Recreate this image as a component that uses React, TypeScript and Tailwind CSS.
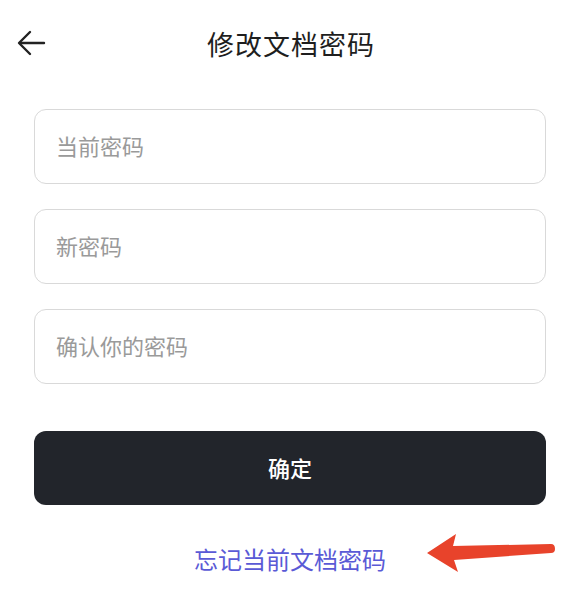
import React from "react";

const font = { fontFamily: '"Noto Sans CJK SC", "Noto Sans", sans-serif' };

function Field({ placeholder }: { placeholder: string }) {
  return (
    <input
      type="password"
      placeholder={placeholder}
      className="h-[75px] w-full rounded-[12px] border border-[#d9d9d9] bg-white px-[21px] pb-[4px] text-[22px] text-[#333] outline-none placeholder:text-[#9a9a9a]"
      style={font}
    />
  );
}

export default function App() {
  return (
    <div className="relative h-[608px] w-[586px] bg-white" style={font}>
      <header className="relative flex h-[88px] items-center justify-center pr-[4px]">
        <button type="button" className="absolute left-[16px] top-[29px] text-[#222]">
          <svg width="32" height="28" viewBox="0 0 32 28" fill="none" stroke="currentColor" strokeWidth="2.4" strokeLinecap="round" strokeLinejoin="round">
            <path d="M28 14H4" />
            <path d="M14 3L3 14l11 11" />
          </svg>
        </button>
        <h1 className="text-[27px] font-normal tracking-[1px] text-[#1e1e1e]">修改文档密码</h1>
      </header>

      <div className="ml-[34px] mt-[21px] flex w-[512px] flex-col gap-[25px]">
        <Field placeholder="当前密码" />
        <Field placeholder="新密码" />
        <Field placeholder="确认你的密码" />
        <button
          type="button"
          className="mt-[22px] h-[74px] w-full rounded-[12px] bg-[#22252b] pb-[2px] text-[22px] font-medium text-white"
        >
          确定
        </button>
      </div>

      <div className="ml-[34px] mt-[36px] flex w-[512px] justify-center">
        <a className="text-[24px] text-[#5a5ad6]">忘记当前文档密码</a>
      </div>

      <svg className="absolute left-[425px] top-[530px]" width="135" height="45" viewBox="0 0 135 45">
        <path
          d="M2 23 L31 4 L28 16 L126 14 Q130 14 130 19 Q130 23 126 23 L29 30 L33 42 Z"
          fill="#e8432b"
        />
      </svg>
    </div>
  );
}
